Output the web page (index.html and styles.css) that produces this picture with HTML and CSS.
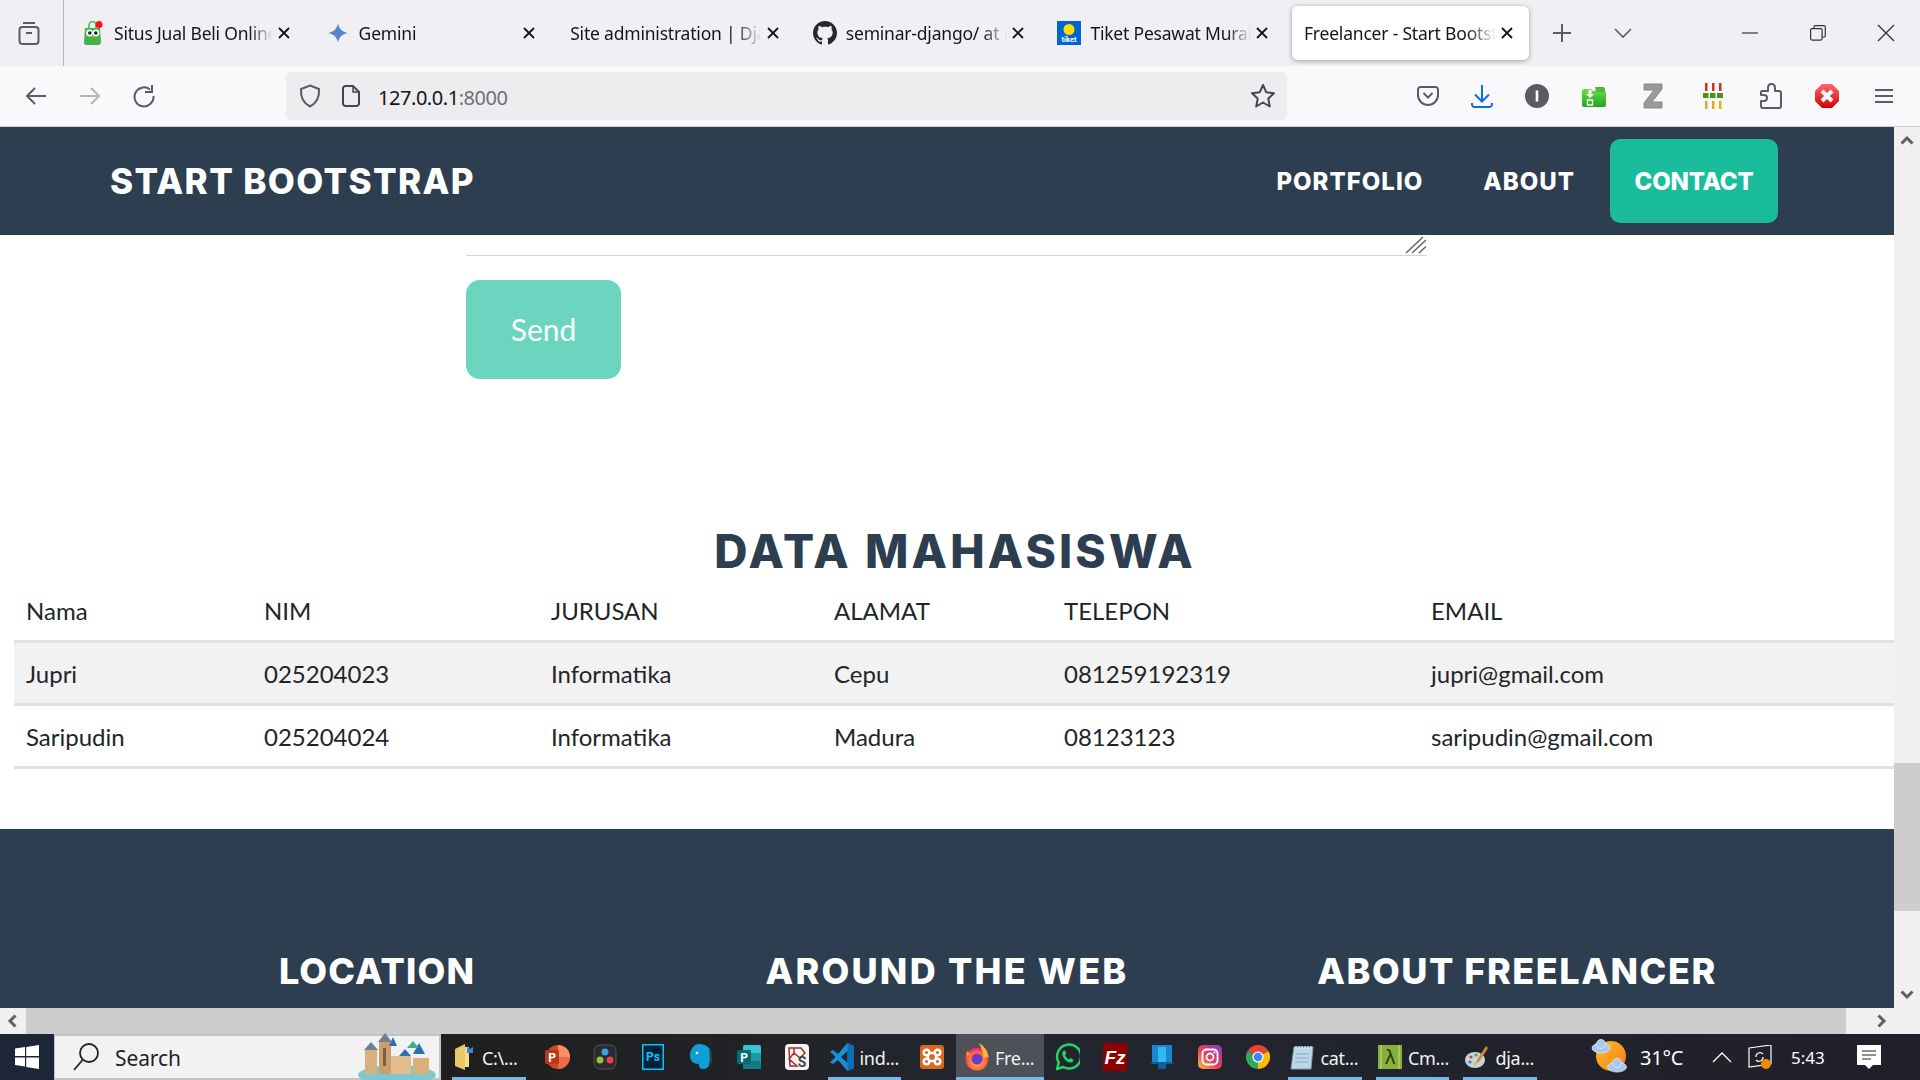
FILE: index.html
```html
<!DOCTYPE html>
<html lang="en">
<head>
<meta charset="utf-8">
<title>Freelancer - Start Bootstrap</title>
<link rel="stylesheet" href="styles.css">
</head>
<body>
<svg class="defs" width="0" height="0" aria-hidden="true">
  <defs>
    <linearGradient id="gem" x1="0" y1="1" x2="1" y2="0"><stop offset="0" stop-color="#9168c0"/><stop offset=".5" stop-color="#5684d1"/><stop offset="1" stop-color="#1ba1e3"/></linearGradient>
    <linearGradient id="insta" x1="0" y1="1" x2="1" y2="0"><stop offset="0" stop-color="#fdc13a"/><stop offset=".45" stop-color="#e9405a"/><stop offset="1" stop-color="#7a3fc0"/></linearGradient>
    <radialGradient id="fox" cx=".5" cy=".6" r=".6"><stop offset="0" stop-color="#ffbd4f"/><stop offset=".6" stop-color="#ff7139"/><stop offset="1" stop-color="#e31587"/></radialGradient>
    <linearGradient id="sun" x1="0" y1="0" x2="1" y2="1"><stop offset="0" stop-color="#fbc02d"/><stop offset="1" stop-color="#f07d12"/></linearGradient>
    <linearGradient id="err" x1="0" y1="0" x2="0" y2="1"><stop offset="0" stop-color="#ff6a6a"/><stop offset="1" stop-color="#d40000"/></linearGradient>
    <linearGradient id="grn" x1="0" y1="0" x2="0" y2="1"><stop offset="0" stop-color="#6fdc4a"/><stop offset="1" stop-color="#1fa51f"/></linearGradient>
  </defs>
</svg>
<div class="window">

  <header class="tabbar">
    <div class="tab-side">
      <svg width="24" height="26" viewBox="0 0 24 26" fill="none" stroke="#5b5b66" stroke-width="2"><path d="M6 3h12"/><rect x="2.500" y="7" width="19" height="17" rx="3"/><path d="M9 13h6"/></svg>
    </div>
    <div class="tabs">
      <div class="tab">
        <svg class="fav" width="20" height="24" viewBox="0 0 20 24"><path d="M2 7h15l1 14a3 3 0 0 1-3 3H4a2.500 2.500 0 0 1-3-3z" fill="#42b549"/><path d="M6 7V4a3.500 3.500 0 0 1 7 0v3" fill="none" stroke="#42b549" stroke-width="1.500"/><circle cx="6.500" cy="12" r="3.400" fill="#fff"/><circle cx="13" cy="12" r="3.400" fill="#fff"/><circle cx="6.800" cy="12" r="1.800" fill="#222"/><circle cx="12.800" cy="12" r="1.800" fill="#222"/><path d="M8.500 15h3l-1.500 2.500z" fill="#f7931e"/><circle cx="16" cy="3.500" r="3.500" fill="#f11"/></svg>
        <span class="tab-title">Situs Jual Beli Online</span><svg class="x" width="14" height="14" viewBox="0 0 14 14"><path d="M2 2l10 10M12 2L2 12"/></svg>
      </div>
      <div class="tab">
        <svg class="fav" width="20" height="24" viewBox="0 0 20 24"><path d="M10 2c.8 5.500 4 9 10 10-6 1-9.200 4.500-10 10-.8-5.500-4-9-10-10 6-1 9.200-4.500 10-10z" fill="url(#gem)"/></svg>
        <span class="tab-title">Gemini</span><svg class="x" width="14" height="14" viewBox="0 0 14 14"><path d="M2 2l10 10M12 2L2 12"/></svg>
      </div>
      <div class="tab tab-plain">
        <span class="tab-title">Site administration | Django</span><svg class="x" width="14" height="14" viewBox="0 0 14 14"><path d="M2 2l10 10M12 2L2 12"/></svg>
      </div>
      <div class="tab tab-big">
        <svg class="fav" width="24" height="24" viewBox="0 0 16 16"><path fill="#24292f" d="M8 0C3.580 0 0 3.580 0 8c0 3.540 2.290 6.530 5.470 7.590.4.070.55-.17.55-.38 0-.19-.01-.82-.01-1.490-2.010.37-2.530-.49-2.690-.94-.09-.23-.48-.94-.82-1.130-.28-.15-.68-.52-.01-.53.630-.01 1.080.58 1.230.82.720 1.210 1.870.87 2.330.66.070-.52.280-.87.510-1.070-1.780-.2-3.640-.89-3.640-3.950 0-.87.310-1.590.820-2.150-.08-.2-.36-1.020.08-2.120 0 0 .67-.21 2.200.82.640-.18 1.320-.27 2-.27s1.360.09 2 .27c1.530-1.040 2.200-.82 2.200-.82.440 1.100.160 1.920.08 2.120.51.560.820 1.270.820 2.150 0 3.070-1.870 3.750-3.650 3.950.290.250.540.730.540 1.480 0 1.070-.01 1.930-.01 2.200 0 .21.150.46.550.38A8.010 8.010 0 0 0 16 8c0-4.420-3.580-8-8-8z"/></svg>
        <span class="tab-title">seminar-django/ at main</span><svg class="x" width="14" height="14" viewBox="0 0 14 14"><path d="M2 2l10 10M12 2L2 12"/></svg>
      </div>
      <div class="tab tab-big">
        <svg class="fav" width="24" height="24" viewBox="0 0 24 24"><rect width="24" height="24" fill="#0064d2"/><circle cx="12" cy="8.500" r="5.500" fill="#ffdd00"/><text x="12" y="21" font-size="7.500" font-weight="700" fill="#fff" text-anchor="middle" font-family="Roboto, sans-serif">tiket</text></svg>
        <span class="tab-title">Tiket Pesawat Murah</span><svg class="x" width="14" height="14" viewBox="0 0 14 14"><path d="M2 2l10 10M12 2L2 12"/></svg>
      </div>
      <div class="tab tab-plain tab-active">
        <span class="tab-title">Freelancer - Start Bootstrap</span><svg class="x" width="14" height="14" viewBox="0 0 14 14"><path d="M2 2l10 10M12 2L2 12"/></svg>
      </div>
    </div>
    <div class="tab-actions">
      <span class="tab-act"><svg width="20" height="20" viewBox="0 0 20 20" stroke="#5b5b66" stroke-width="2" fill="none"><path d="M10 1v18M1 10h18"/></svg></span>
      <span class="tab-act"><svg width="20" height="12" viewBox="0 0 20 12" stroke="#5b5b66" stroke-width="1.600" fill="none"><path d="M2 2l8 8 8-8"/></svg></span>
    </div>
    <div class="win-controls">
      <span class="win-btn"><svg width="16" height="16" viewBox="0 0 16 16" stroke="#333" stroke-width="1.200" fill="none"><path d="M0 8h16"/></svg></span>
      <span class="win-btn"><svg width="16" height="16" viewBox="0 0 16 16" stroke="#333" stroke-width="1.200" fill="none"><rect x=".6" y="3.600" width="11.500" height="11.500" rx="1.500"/><path d="M4 3.500V2a1.300 1.300 0 0 1 1.300-1.300H14A1.300 1.300 0 0 1 15.300 2v8.700A1.300 1.300 0 0 1 14 12h-1.800"/></svg></span>
      <span class="win-btn"><svg width="18" height="18" viewBox="0 0 18 18" stroke="#333" stroke-width="1.300" fill="none"><path d="M1 1l16 16M17 1L1 17"/></svg></span>
    </div>
  </header>

  <div class="toolbar">
    <div class="nav-btns">
      <span class="tool"><svg width="22" height="22" viewBox="0 0 22 22" fill="none" stroke="#5b5b66" stroke-width="2"><path d="M21 11H2M10 3l-8 8 8 8"/></svg></span>
      <span class="tool"><svg width="22" height="22" viewBox="0 0 22 22" fill="none" stroke="#b5b5bb" stroke-width="2"><path d="M1 11h19M12 3l8 8-8 8"/></svg></span>
      <span class="tool"><svg width="24" height="24" viewBox="0 0 24 24" fill="none" stroke="#5b5b66" stroke-width="2"><path d="M18 5.500A9.500 9.500 0 1 0 21.500 12"/><path d="M20 1v7h-7" stroke-width="2"/></svg></span>
    </div>
    <div class="urlbar">
      <svg class="url-shield" width="22" height="24" viewBox="0 0 22 24" fill="none" stroke="#5b5b66" stroke-width="2"><path d="M11 1.500 20 5c.5 8-2 14-9 17.500C4 19 1.500 13 2 5z"/></svg>
      <svg class="url-page" width="18" height="22" viewBox="0 0 18 22" fill="none" stroke="#45454f" stroke-width="2"><path d="M3.500 1H11l6 6v11.500a2.500 2.500 0 0 1-2.500 2.500h-11A2.500 2.500 0 0 1 1 18.500v-15A2.500 2.500 0 0 1 3.500 1z"/><path d="M11 1v6h6" stroke-width="1.500"/></svg>
      <span class="url-text">127.0.0.1<span class="url-port">:8000</span></span>
      <svg class="url-star" width="26" height="26" viewBox="0 0 26 26" fill="none" stroke="#45454f" stroke-width="2" stroke-linejoin="round"><path d="M13 2l3.300 7.300 7.700.9-5.700 5.400 1.500 7.900L13 19.500l-6.800 4 1.500-7.900L2 10.200l7.700-.9z"/></svg>
    </div>
    <div class="tool-right">
      <span class="tool2"><svg width="22" height="22" viewBox="0 0 22 22" fill="none" stroke="#5b5b66" stroke-width="2"><path d="M3.500 2h15A2.500 2.500 0 0 1 21 4.500V10a10 10 0 0 1-20 0V4.500A2.500 2.500 0 0 1 3.500 2z"/><path d="M6.500 8l4.500 4.500L15.500 8"/></svg></span>
      <span class="tool2"><svg width="22" height="24" viewBox="0 0 22 24" fill="none" stroke="#0b6fe8" stroke-width="2"><path d="M11 1v16M4 10.500l7 7 7-7M1 19v1.500A2.500 2.500 0 0 0 3.500 23h15a2.500 2.500 0 0 0 2.500-2.500V19"/></svg></span>
      <span class="tool2"><svg width="24" height="24" viewBox="0 0 24 24"><circle cx="12" cy="12" r="12" fill="#5b5b66"/><rect x="10.700" y="6.500" width="2.600" height="11" fill="#fff"/></svg></span>
      <span class="tool2"><svg width="24" height="22" viewBox="0 0 24 22"><path d="M0 6q0-2 2-2h7l2 2h11q2 0 2 2v12q0 2-2 2H2q-2 0-2-2z" fill="url(#grn)"/><path d="M13 2h8q2 0 2 2v3H14z" fill="#4dbb33"/><path d="M6.500 5h3v4H12l-4 4-4-4h2.500z" fill="#fff"/><rect x="5.500" y="15" width="5" height="5" fill="none" stroke="#fff" stroke-width="1.400"/></svg></span>
      <span class="tool2"><svg width="20" height="26" viewBox="0 0 20 26"><path d="M1 1h18v5L9 19h10v6H1v-5L11 7H1z" fill="#999" stroke="#888"/></svg></span>
      <span class="tool2"><svg width="20" height="26" viewBox="0 0 20 26"><path d="M2 0h2.500v8H2zM9 0h2.500v8H9zM16 0h2.500v8H16z" fill="#d1321e"/><path d="M0 10h5.500v5H0zM7 10h5.500v5H7zM14 10h6v5h-6z" fill="#3f9a14"/><path d="M2 18h2.500v8H2zM9 18h2.500v8H9zM16 18h2.500v8H16z" fill="#dcb10e"/></svg></span>
      <span class="tool2"><svg width="22" height="26" viewBox="0 0 22 26" fill="none" stroke="#5b5b66" stroke-width="2" stroke-linejoin="round"><path d="M3 25q-2 0-2-2v-5h3q3 0 3-3t-3-3H1V9q0-1 1-1h6V5q0-4 3.500-4T15 5v3h4q2 0 2 2v13q0 2-2 2z"/></svg></span>
      <span class="tool2"><svg width="24" height="24" viewBox="0 0 24 24"><path d="M7 0h10l7 7v10l-7 7H7l-7-7V7z" fill="url(#err)"/><path d="M7 7l10 10M17 7L7 17" stroke="#fff" stroke-width="4"/></svg></span>
      <span class="tool2"><svg width="18" height="16" viewBox="0 0 18 16" stroke="#5b5b66" stroke-width="2"><path d="M0 2h18M0 8h18M0 14h18"/></svg></span>
    </div>
  </div>

  <div class="viewport">
    <main class="page">
      <nav class="site-nav">
        <a class="brand">START BOOTSTRAP</a>
        <div class="nav-links">
          <a class="nav-link link-portfolio">PORTFOLIO</a>
          <a class="nav-link link-about">ABOUT</a>
          <a class="nav-link nav-active">CONTACT</a>
        </div>
      </nav>

      <div class="form-end">
        <div class="textarea-rest">
          <svg class="resizer" width="22" height="18" viewBox="0 0 22 18" stroke="#666" stroke-width="1.500"><path d="M1 17L18 1M7 17L21 4M14 17l7-6.500"/></svg>
        </div>
        <button class="send" type="button">Send</button>
      </div>

      <h2 class="data-title">DATA MAHASISWA</h2>
      <table class="data-table">
        <thead>
          <tr><td class="c1">Nama</td><td class="c2">NIM</td><td class="c3">JURUSAN</td><td class="c4">ALAMAT</td><td class="c5">TELEPON</td><td class="c6">EMAIL</td></tr>
        </thead>
        <tbody>
          <tr class="row-odd"><td>Jupri</td><td>025204023</td><td>Informatika</td><td>Cepu</td><td>081259192319</td><td>jupri@gmail.com</td></tr>
          <tr><td>Saripudin</td><td>025204024</td><td>Informatika</td><td>Madura</td><td>08123123</td><td>saripudin@gmail.com</td></tr>
        </tbody>
      </table>

      <footer class="site-footer">
        <h4 class="foot-h">LOCATION</h4>
        <h4 class="foot-h foot-web">AROUND THE WEB</h4>
        <h4 class="foot-h foot-about">ABOUT FREELANCER</h4>
      </footer>
    </main>
    <div class="vscroll">
      <span class="sb-btn"><svg width="14" height="10" viewBox="0 0 14 10" fill="none" stroke="#606060" stroke-width="3"><path d="M1.500 8.500L7 3l5.500 5.500"/></svg></span>
      <span class="sb-gap"></span>
      <span class="sb-thumb"></span>
      <span class="sb-fill"></span>
      <span class="sb-btn"><svg width="14" height="10" viewBox="0 0 14 10" fill="none" stroke="#606060" stroke-width="3"><path d="M1.500 1.500L7 7l5.500-5.500"/></svg></span>
    </div>
  </div>

  <div class="hscroll">
    <span class="hs-left"><svg width="10" height="14" viewBox="0 0 10 14" fill="none" stroke="#606060" stroke-width="3"><path d="M8.500 1.500L3 7l5.500 5.500"/></svg></span>
    <span class="hs-thumb"></span>
    <span class="hs-right"><svg width="10" height="14" viewBox="0 0 10 14" fill="none" stroke="#606060" stroke-width="3"><path d="M1.500 1.500L7 7l-5.500 5.500"/></svg></span>
  </div>

  <div class="taskbar">
    <span class="start"><svg width="24" height="24" viewBox="0 0 24 24" fill="#fff"><path d="M0 3.500l10-1.400V11H0zM11.200 2l12.800-2v11H11.200zM0 12.500h10v9L0 20zM11.200 12.500H24V24l-12.800-2z"/></svg></span>
    <label class="search">
      <svg width="28" height="30" viewBox="0 0 28 30" fill="none" stroke="#222" stroke-width="1.800"><circle cx="17" cy="11" r="9"/><path d="M10.500 18L2 28"/></svg>
      <span class="search-text">Search</span>
      <svg class="castle" width="80" height="54" viewBox="0 0 80 54"><ellipse cx="40" cy="43" rx="39" ry="10" fill="#7fc6cf"/><rect x="8" y="18" width="12" height="24" fill="#d8b07c"/><rect x="22" y="10" width="12" height="32" fill="#c99f6e"/><rect x="34" y="24" width="20" height="18" fill="#e0bd8b"/><rect x="56" y="26" width="16" height="16" fill="#d8b07c"/><path d="M7 18l7-8 7 8zM21 10l7-9 7 9z" fill="#6f7f9c"/><path d="M32 14l4-9 4 9z" fill="#2d6fb0"/><path d="M42 24l6-7 6 7zM56 22l6-11 6 11z" fill="#2d6fb0"/><path d="M50 16l6-7 6 7z" fill="#3fb28a"/><rect x="26" y="16" width="3" height="18" fill="#7a6248"/></svg>
    </label>
    <div class="task-items">
      <span class="task wide"><svg width="22" height="26" viewBox="0 0 22 26"><path d="M1 5l10-5v26L1 22z" fill="#e8c96a"/><path d="M11 3h4v20h-4z" fill="#f6dd8a"/><path d="M13 2l3 3 3-2v6h-6z" fill="#3d88d6"/></svg><span class="task-label">C:\...</span></span>
      <span class="task"><svg width="26" height="26" viewBox="0 0 26 26"><circle cx="14" cy="13" r="12" fill="#d24726"/><path d="M14 1a12 12 0 0 1 12 12H14z" fill="#ff8f6b"/><path d="M14 13h12a12 12 0 0 1-12 12z" fill="#ed6c47"/><rect x="1" y="6" width="14" height="14" rx="1.500" fill="#b7391d"/><text x="8" y="17.500" font-size="12" font-weight="700" fill="#fff" text-anchor="middle" font-family="Roboto, sans-serif">P</text></svg></span>
      <span class="task"><svg width="24" height="26" viewBox="0 0 24 26"><rect x="1" y="1" width="22" height="24" rx="6" fill="#2a2a30" stroke="#555"/><circle cx="12" cy="8" r="3.500" fill="#36a3dc"/><circle cx="7" cy="16" r="3.500" fill="#8cc63f"/><circle cx="17" cy="16" r="3.500" fill="#e6413e"/></svg></span>
      <span class="task"><svg width="22" height="26" viewBox="0 0 22 26"><rect x=".75" y=".75" width="20.500" height="24.500" fill="#001e36" stroke="#00c8ff" stroke-width="1.500"/><text x="11" y="17" font-size="12" font-weight="700" fill="#00c8ff" text-anchor="middle" font-family="Roboto, sans-serif">Ps</text></svg></span>
      <span class="task"><svg width="24" height="26" viewBox="0 0 24 26"><path d="M10 0c8 0 13 5 13 13 0 8-4 12-9 12-3 0-4-2-4-5-5 0-9-3-9-8C1 5 5 0 10 0z" fill="#0f9fd8"/><path d="M20 5q4 4 3 10t-4 9q3-8 1-19z" fill="#33363d"/><circle cx="8" cy="9" r="1.300" fill="#fff"/></svg></span>
      <span class="task"><svg width="26" height="26" viewBox="0 0 26 26"><rect x="7" y="1" width="18" height="24" rx="2" fill="#37c6d0"/><rect x="7" y="9" width="18" height="8" fill="#1a9ba1"/><rect x="7" y="17" width="18" height="8" rx="2" fill="#107c82"/><rect x="1" y="6" width="14" height="14" rx="1.500" fill="#036c70"/><text x="8" y="17.500" font-size="12" font-weight="700" fill="#fff" text-anchor="middle" font-family="Roboto, sans-serif">P</text></svg></span>
      <span class="task"><svg width="24" height="26" viewBox="0 0 24 26"><rect width="24" height="26" rx="4" fill="#f5f5f5"/><path d="M4 4h12l4 5-5 5-6-5-5 6 8 7H5zM9 4v5M4 15l5-6" fill="none" stroke="#a82a2a" stroke-width="1.500"/><text x="17" y="23" font-size="14" font-weight="700" fill="#444" text-anchor="middle" font-family="Roboto, sans-serif">S</text></svg></span>
      <span class="task wide"><svg width="24" height="28" viewBox="0 0 24 28"><path fill="#1a8fd8" fill-rule="evenodd" d="M17.500 0L8 11 3 7 0 8.500 5.500 14 0 19.500 3 21l5-4 9.500 11 6.500-3V3zM17.500 8L11 14l6.500 6z"/><path fill="#0a6fb8" d="M17.500 0L24 3v22l-6.500 3z"/></svg><span class="task-label">ind...</span></span>
      <span class="task"><svg width="24" height="24" viewBox="0 0 24 24"><rect width="24" height="24" rx="3" fill="#d9691e"/><g fill="none" stroke="#fff" stroke-width="2.400"><path d="M8 9v6M16 9v6M9 8h6M9 16h6"/><circle cx="6.500" cy="7.500" r="2.800"/><circle cx="17.500" cy="7.500" r="2.800"/><circle cx="6.500" cy="16.500" r="2.800"/><circle cx="17.500" cy="16.500" r="2.800"/></g></svg></span>
      <span class="task wide task-on"><svg width="24" height="28" viewBox="0 0 24 28"><circle cx="12" cy="16" r="11.500" fill="url(#fox)"/><path d="M14 0c5 3 9 8 9.500 14l-5 1c0-5-2-10-4.500-15z" fill="#ffb92e"/><path d="M2 8c-1 2-1 4 0 6l4-3z" fill="#ff8a2c"/><circle cx="12" cy="16" r="5.500" fill="#6e3ac9"/></svg><span class="task-label">Fre...</span></span>
      <span class="task tight"><svg width="26" height="28" viewBox="0 0 26 28" fill="none"><path d="M3 26l1.700-6.500A12 12 0 1 1 9.300 24z" stroke="#25d366" stroke-width="2.500" stroke-linejoin="round"/><path d="M9 8c-1.500 2-1 5 1.500 8s5.500 4.500 8 3l1-2-3-2-1.500 1.500c-2-1-3-2.500-4-4.500l1.500-1.500L11 7.500z" fill="#25d366"/></svg></span>
      <span class="task tight"><svg width="24" height="28" viewBox="0 0 24 28"><rect width="24" height="28" fill="#8f0000"/><text x="12" y="21" font-size="19" font-weight="700" font-style="italic" fill="#fff" text-anchor="middle" font-family="Liberation Sans, sans-serif">Fz</text></svg></span>
      <span class="task tight"><svg width="24" height="26" viewBox="0 0 24 26"><rect x="2" y="1" width="20" height="17" fill="#1a86d0"/><rect x="8" y="3" width="8" height="15" fill="#35b8ef"/><path d="M0 18h24l-2 2H2z" fill="#0f5f9e"/><rect x="8" y="20" width="8" height="5" fill="#0f5f9e"/></svg></span>
      <span class="task tight"><svg width="24" height="24" viewBox="0 0 24 24"><rect width="24" height="24" rx="5" fill="url(#insta)"/><rect x="4.500" y="4.500" width="15" height="15" rx="4" fill="none" stroke="#fff" stroke-width="1.800"/><circle cx="12" cy="12" r="3.500" fill="none" stroke="#fff" stroke-width="1.800"/><circle cx="16.500" cy="7.500" r="1.100" fill="#fff"/></svg></span>
      <span class="task tight"><svg width="24" height="24" viewBox="0 0 24 24"><path d="M12 12L1.600 6A12 12 0 0 1 22.400 6z" fill="#ea4335"/><path d="M12 12L22.400 6A12 12 0 0 1 12 24z" fill="#fbbc05"/><path d="M12 12L12 24A12 12 0 0 1 1.600 6z" fill="#34a853"/><circle cx="12" cy="12" r="5.600" fill="#fff"/><circle cx="12" cy="12" r="4.400" fill="#4285f4"/></svg></span>
      <span class="task wide"><svg width="24" height="26" viewBox="0 0 24 26"><path d="M4 3h19l-2 22H1z" fill="#b9d8e8" stroke="#7f9fb0"/><path d="M6 2v3M9 2v3M12 2v3M15 2v3M18 2v3M21 2v3" stroke="#dfe9ee" stroke-width="1.300"/><path d="M6 10h13M5.500 14h13M5 18h13" stroke="#8ba7b5"/></svg><span class="task-label">cat...</span></span>
      <span class="task wide"><svg width="24" height="24" viewBox="0 0 24 24"><rect width="24" height="24" fill="#88b03c"/><path d="M3 0v24M21 0v24" stroke="#a6c767" stroke-width="2"/><text x="12" y="19" font-size="19" fill="#2f3a17" text-anchor="middle" font-family="DejaVu Sans, sans-serif">λ</text></svg><span class="task-label">Cm...</span></span>
      <span class="task wide"><svg width="24" height="26" viewBox="0 0 24 26"><ellipse cx="10" cy="16" rx="10" ry="8" fill="#c8d4dc"/><circle cx="6" cy="13" r="1.600" fill="#e23b3b"/><circle cx="11" cy="11" r="1.600" fill="#3fb24a"/><circle cx="5" cy="18" r="1.600" fill="#2e7ed6"/><circle cx="10" cy="20" r="1.600" fill="#f0b92b"/><path d="M21 2l2 2-9 14-3 1 1-3z" fill="#d18a3a"/></svg><span class="task-label">dja...</span></span>
    </div>
    <div class="tray">
      <svg class="tray-weather" width="36" height="38" viewBox="0 0 36 38"><circle cx="20" cy="18" r="15" fill="url(#sun)"/><g fill="#a8c6ee" stroke="#e2edf9" stroke-width=".8"><ellipse cx="10" cy="10" rx="9" ry="5"/><circle cx="10" cy="6" r="4.500"/><ellipse cx="26" cy="29" rx="9.500" ry="5"/><circle cx="26" cy="25" r="4.500"/></g></svg>
      <span class="tray-temp">31°C</span>
      <svg class="tray-caret" width="20" height="12" viewBox="0 0 20 12" fill="none" stroke="#fff" stroke-width="1.300"><path d="M1 11l9-9 9 9"/></svg>
      <svg class="tray-sync" width="24" height="24" viewBox="0 0 24 24" fill="none" stroke="#fff" stroke-width="1.200"><path d="M1 3l22-3v19L1 22z"/><path d="M8 12a4 4 0 0 1 7-3M15 12a4 4 0 0 1-7 3"/><circle cx="18" cy="19" r="5" fill="#f58a07" stroke="none"/></svg>
      <span class="tray-time">5:43</span>
      <svg class="tray-note" width="24" height="24" viewBox="0 0 24 24"><path d="M0 0h24v20h-8l-4 4-4-4H0z" fill="#fff"/><path d="M5 6h14M5 10h14M5 14h9" stroke="#222" stroke-width="1.200"/></svg>
    </div>
  </div>
</div>
</body>
</html>
```

FILE: styles.css
```css
* { box-sizing: border-box; }
html, body { margin: 0; padding: 0; height: 100%; overflow: hidden; }
body { font-family: "Lato", "Noto Sans", sans-serif; background: #fff; color: #212529; }
.defs { position: absolute; }
.window { width: 1920px; height: 1080px; display: flex; flex-direction: column; overflow: hidden; }

/* tab strip */
.tabbar { height: 66px; flex: none; background: #f0f0f4; display: flex; align-items: flex-start; }
.tab-side { width: 64px; height: 66px; flex: none; border-right: 1px solid #b9b9bd; display: flex; align-items: center; justify-content: center; padding-right: 6px; margin-right: 3px; }
.tabs { display: flex; gap: 7.600px; padding-top: 6px; }
.tab { width: 237px; height: 54px; display: flex; align-items: center; padding: 0 13px 0 16px; border-radius: 6px; color: #15141a; }
.fav { flex: none; margin-right: 11px; }
.tab-plain { padding-left: 14px; }
.tab-big { padding-left: 12px; }
.tab-big .fav { margin-right: 9px; }
.tab-active { background: #fff; box-shadow: 0 1px 5px rgba(0,0,0,.35); margin-left: 2px; padding-left: 12px; padding-right: 15px; }
.tab-title { flex: 1; min-width: 0; white-space: nowrap; overflow: hidden; font-family: "Noto Sans", sans-serif; font-size: 17.500px; letter-spacing: -.2px; -webkit-mask-image: linear-gradient(90deg, #000 85%, transparent 100%); mask-image: linear-gradient(90deg, #000 85%, transparent 100%); }
.x { flex: none; margin-left: 4px; fill: none; stroke: #15141a; stroke-width: 1.800; }
.tab-actions { display: flex; margin-left: 11px; gap: 17px; padding-top: 11px; }
.tab-act { width: 44px; height: 44px; display: flex; align-items: center; justify-content: center; }
.win-controls { margin-left: auto; display: flex; }
.win-btn { width: 68px; height: 65px; display: flex; align-items: center; justify-content: center; }

/* toolbar */
.toolbar { height: 61px; flex: none; background: #f9f9fb; border-bottom: 1px solid #cfcfd8; display: flex; align-items: center; padding-left: 14px; }
.nav-btns { display: flex; gap: 10px; width: 272px; flex: none; }
.tool { width: 44px; height: 44px; display: flex; align-items: center; justify-content: center; }
.urlbar { width: 1001px; height: 48px; flex: none; background: #ededf0; border-radius: 6px; display: flex; align-items: center; padding: 0 11px 0 13px; }
.url-shield { flex: none; margin-right: 21px; }
.url-page { flex: none; margin-right: 18px; }
.url-text { flex: 1; font-family: "Noto Sans", sans-serif; font-size: 20px; letter-spacing: -.45px; color: #15141a; padding-top: 2px; }
.url-port { color: #6f6f77; }
.tool-right { margin-left: 114px; display: grid; grid-template-columns: 54px 54px 55px 59px 60px 59px 57px 56px 58px; }
.tool2 { height: 44px; display: flex; align-items: center; justify-content: center; }

/* page viewport */
.viewport { height: 881px; flex: none; display: flex; }
.page { width: 1894px; flex: none; overflow: hidden; background: #fff; }
.site-nav { height: 108px; background: #2c3e50; display: flex; align-items: center; justify-content: space-between; padding: 0 116px 0 110px; }
.brand { font-family: "Inter", sans-serif; font-weight: 800; font-size: 35px; letter-spacing: 1.350px; color: #fff; white-space: nowrap; }
.nav-links { display: flex; align-items: center; }
.nav-link { font-family: "Inter", sans-serif; font-weight: 800; font-size: 24px; letter-spacing: 1px; color: #fff; white-space: nowrap; }
.link-portfolio { margin-right: 60px; }
.link-about { margin-right: 35px; }
.nav-active { width: 168px; height: 84px; background: #1abc9c; border-radius: 10px; display: flex; align-items: center; justify-content: center; letter-spacing: -.2px; }

.form-end { padding-left: 466px; }
.textarea-rest { width: 961px; height: 21px; border-bottom: 1px solid #d5d5d5; position: relative; }
.resizer { position: absolute; right: 0; bottom: 1px; }
.send { display: block; margin-top: 24px; width: 155px; height: 99px; border: 0; border-radius: 14px; background: #6bd5c0; color: #fff; font-family: "Lato", sans-serif; font-size: 30px; padding: 0 0 2px; }

.data-title { margin: 144px 0 4px; height: 56px; line-height: 56px; text-align: center; font-family: "Inter", sans-serif; font-weight: 800; font-size: 46px; letter-spacing: 3.200px; color: #2c3e50; padding-left: 16px; }

.data-table { margin-left: 14px; width: 1880px; border-collapse: separate; border-spacing: 0; table-layout: fixed; font-size: 24px; color: #212529; }
.data-table td { padding: 0 0 0 12px; height: 63px; border-bottom: 3px solid #dee2e6; white-space: nowrap; }
.data-table thead td { height: 60px; padding-bottom: 2px; }
.row-odd { background: #f2f2f2; }
.c1 { width: 238px; } .c2 { width: 287px; } .c3 { width: 283px; } .c4 { width: 230px; } .c5 { width: 367px; } .c6 { width: 475px; }

.site-footer { margin-top: 60px; height: 179px; background: #2c3e50; display: grid; grid-template-columns: repeat(3, 570px); padding: 120px 0 0 92px; overflow: hidden; }
.foot-h { margin: 0; height: 44px; line-height: 44px; text-align: center; font-family: "Inter", sans-serif; font-weight: 800; font-size: 36px; letter-spacing: 1.100px; color: #fff; white-space: nowrap; }
.foot-web { letter-spacing: 2.200px; }
.foot-about { letter-spacing: 1.550px; }

/* scrollbars */
.vscroll { flex: 1; background: #f0f0f0; display: flex; flex-direction: column; }
.sb-btn { height: 26px; flex: none; display: flex; align-items: center; justify-content: center; }
.sb-gap { height: 610px; flex: none; }
.sb-thumb { height: 148px; flex: none; background: #cdcdcd; }
.sb-fill { flex: 1; }
.hscroll { height: 26px; flex: none; display: flex; background: #f0f0f0; }
.hs-left { width: 26px; flex: none; display: flex; align-items: center; justify-content: flex-start; padding-left: 7px; }
.hs-thumb { width: 1820px; flex: none; background: #cdcdcd; }
.hs-right { width: 41px; flex: none; display: flex; align-items: center; justify-content: flex-end; }

/* windows taskbar */
.taskbar { height: 46px; flex: none; display: flex; background: linear-gradient(90deg, #1c2636 0, #1c2636 54px, #1f1f1e 441px, #23262f 1000px, #20202a 1920px); color: #fff; }
.start { width: 54px; flex: none; display: flex; align-items: center; justify-content: center; }
.search { width: 387px; height: 46px; flex: none; background: #f2f2f2; border: 2px solid #c4c4c4; border-left-width: 1px; display: flex; align-items: center; padding-left: 17px; color: #222; position: relative; }
.search-text { font-family: "Noto Sans", sans-serif; font-size: 21px; margin-left: 15px; letter-spacing: -.1px; padding-top: 2px; }
.castle { position: absolute; right: 2px; top: -4px; }
.task-items { display: flex; margin-left: 4px; }
.task { width: 48px; height: 46px; flex: none; display: flex; align-items: center; justify-content: center; position: relative; }
.tight { width: 47.600px; }
.wide { width: 87.500px; justify-content: flex-start; padding-left: 9px; gap: 6px; }
.wide::after { content: ""; position: absolute; left: 7px; right: 7px; bottom: 0; height: 3px; background: #76b9ed; }
.task-on { background: #4f5159; }
.task-on::after { left: 0; right: 0; }
.task-label { font-family: "Noto Sans", sans-serif; font-size: 18px; letter-spacing: -.3px; white-space: nowrap; color: #f3f3f3; padding-top: 2px; }
.tray { flex: 1; display: flex; align-items: center; position: relative; padding-left: 47px; }
.tray-weather { flex: none; }
.tray-temp { font-family: "Noto Sans", sans-serif; font-size: 20px; margin-left: 13px; letter-spacing: -.2px; width: 72px; }
.tray-caret { flex: none; }
.tray-sync { flex: none; margin-left: 16px; }
.tray-time { font-family: "Noto Sans", sans-serif; font-size: 17px; margin-left: 19px; width: 66px; }
.tray-note { flex: none; }
```
